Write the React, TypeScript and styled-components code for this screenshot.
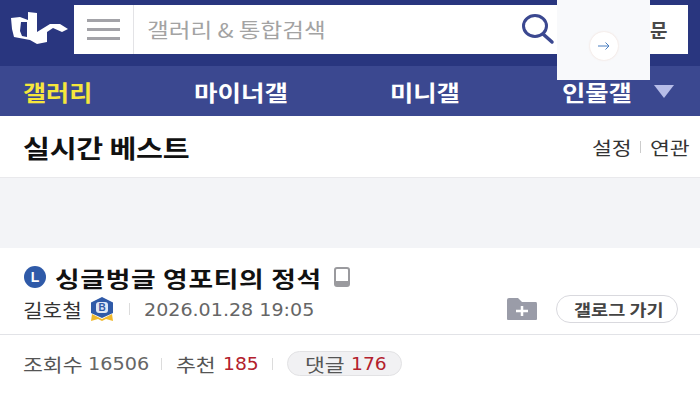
import React from 'react'
import styled, { createGlobalStyle } from 'styled-components'

const KR = `"Noto Sans CJK KR", "Liberation Sans", sans-serif`

const Global = createGlobalStyle`
  html, body { margin: 0; padding: 0; background: #fff; }
  body { width: 700px; height: 400px; overflow: hidden; font-family: ${KR}; }
`

// the page in the picture is stretched sideways, so text gets a fixed box and a horizontal scale
const Wide = styled.span<{ $w: number; $x: number }>`
  display: inline-block;
  flex: none;
  width: ${(p) => p.$w}px;
  white-space: nowrap;
  transform-origin: left center;
  transform: scaleX(${(p) => p.$x});
`

const Page = styled.div`
  position: relative;
  width: 700px;
  height: 400px;
  overflow: hidden;
`

const Header = styled.header`
  display: flex;
  align-items: flex-start;
  height: 66px;
  box-sizing: border-box;
  padding: 5px 12px 0 10px;
  background: #29367f;
`

const Logo = styled.svg`
  width: 60px;
  height: 36px;
  margin-top: 6px;
  margin-right: 4px;
  flex: none;
`

const SearchBox = styled.div`
  flex: 1;
  display: flex;
  align-items: center;
  height: 49px;
  background: #fff;
`

const MenuButton = styled.div`
  display: flex;
  flex-direction: column;
  justify-content: center;
  gap: 6px;
  width: 60px;
  height: 100%;
  box-sizing: border-box;
  padding: 0 13px;
  border-right: 1px solid #e3e3e6;
`

const MenuBar = styled.span`
  display: block;
  height: 3px;
  background: #a3a3a8;
`

const Placeholder = styled(Wide)`
  margin-left: 13px;
  margin-right: auto;
  font-size: 20px;
  color: #a3a3a3;
`

const SearchIcon = styled.svg`
  width: 34px;
  height: 34px;
  margin-right: 133px;
  flex: none;
`

const LoginLabel = styled.span`
  position: absolute;
  left: 650px;
  top: 16px;
  font-size: 19px;
  font-weight: 700;
  color: #4a4a4a;
`

const AdOverlay = styled.div`
  position: absolute;
  left: 557px;
  top: 0;
  width: 93px;
  height: 80px;
  display: flex;
  align-items: center;
  justify-content: center;
  padding-top: 12px;
  box-sizing: border-box;
  background: #f8f9fb;
`

const AdArrow = styled.div`
  display: flex;
  align-items: center;
  justify-content: center;
  width: 28px;
  height: 28px;
  border-radius: 50%;
  background: #fff;
  box-shadow: 0 0 2px rgba(230, 190, 170, 0.6);
`

const Nav = styled.nav`
  display: grid;
  grid-template-columns: 171px 196px 172px 1fr;
  align-items: center;
  height: 50px;
  box-sizing: border-box;
  padding-left: 23px;
  background: #3b4890;
`

const NavItem = styled.div<{ $active?: boolean }>`
  display: flex;
  align-items: center;
  font-size: 22px;
  font-weight: 700;
  line-height: 50px;
  color: ${(p) => (p.$active ? '#f5e63c' : '#fff')};
`

const NavArrow = styled.span`
  width: 0;
  height: 0;
  margin-left: 22px;
  border-left: 10px solid transparent;
  border-right: 10px solid transparent;
  border-top: 13px solid #b7bde8;
`

const SectionBar = styled.div`
  display: flex;
  align-items: center;
  justify-content: space-between;
  height: 62px;
  box-sizing: border-box;
  padding: 0 10px 0 23px;
  border-bottom: 1px solid #e9e9ec;
`

const SectionTitle = styled(Wide)`
  font-size: 25px;
  font-weight: 700;
  letter-spacing: -0.2px;
  color: #111;
`

const SectionLinks = styled.div`
  display: flex;
  align-items: center;
  font-size: 18px;
  color: #333;
`

const LinkDivider = styled.span`
  width: 1px;
  height: 12px;
  margin: 0 9px 0 9px;
  background: #ccc;
`

const AdBand = styled.div`
  height: 70px;
  background: #f3f4f7;
`

const PostHead = styled.div`
  height: 87px;
  box-sizing: border-box;
  padding: 15px 22px 0 24px;
  border-bottom: 1px solid #e2e3e7;
`

const TitleRow = styled.div`
  display: flex;
  align-items: center;
  height: 28px;
`

const LevelBadge = styled.span`
  display: flex;
  align-items: center;
  justify-content: center;
  width: 22px;
  height: 22px;
  margin-right: 9px;
  border-radius: 50%;
  background: #2f5aa8;
  font-family: "Liberation Sans", sans-serif;
  font-size: 14px;
  font-weight: 700;
  color: #fff;
`

const PostTitle = styled(Wide)`
  margin-right: 13px;
  font-size: 22px;
  font-weight: 700;
  letter-spacing: 0.6px;
  color: #111;
`

const MetaRow = styled.div`
  display: flex;
  align-items: center;
  height: 32px;
  margin-top: 2px;
  margin-left: -1px;
`

const Author = styled(Wide)`
  font-size: 19px;
  color: #333;
`

const Divider = styled.span`
  width: 1px;
  height: 12px;
  margin: 0 14px;
  background: #dcdcdc;
`

const BadgeIcon = styled.svg`
  width: 26px;
  height: 26px;
  margin-left: 8px;
`

const DateText = styled(Wide)`
  font-family: "DejaVu Sans", sans-serif;
  font-size: 18px;
  color: #666;
`

const FolderIcon = styled.svg`
  width: 32px;
  height: 24px;
  margin-left: auto;
  margin-right: 18px;
`

const GallogButton = styled.div`
  display: flex;
  align-items: center;
  width: 122px;
  height: 28px;
  box-sizing: border-box;
  padding-left: 17px;
  border: 1px solid #d9d9de;
  border-radius: 14px;
  font-size: 16px;
  font-weight: 700;
  color: #444;
`

const StatsRow = styled.div`
  display: flex;
  align-items: center;
  height: 57px;
  padding-left: 23px;
  font-size: 18px;
  color: #555;
`

const Num = styled(Wide)<{ $red?: boolean }>`
  margin-left: 8px;
  font-family: "DejaVu Sans", sans-serif;
  font-size: 17px;
  color: ${(p) => (p.$red ? '#b3202c' : '#666')};
`

const ReplyPill = styled.span`
  display: flex;
  align-items: center;
  height: 25px;
  box-sizing: border-box;
  padding: 0 15px 0 17px;
  border: 1px solid #e2e2e4;
  border-radius: 13px;
  background: #f1f1f3;
`

export default function App() {
  return (
    <Page>
      <Global />
      <Header>
        <Logo viewBox="0 0 60 36">
          <path
            d="M1 7 L10 6 L18 9 L18 1 L27 2 L27 21 L40 13 L50 13 L58 18 L52 21 L43 17 L37 21 L37 31 L27 33 L20 29 L4 26 L2 18 Z M11 11 L10 20 L12 25 L17 26 L17 11 Z"
            fill="#fff"
            fillRule="evenodd"
          />
        </Logo>
        <SearchBox>
          <MenuButton>
            <MenuBar />
            <MenuBar />
            <MenuBar />
          </MenuButton>
          <Placeholder $w={180} $x={1.18}>
            갤러리 &amp; 통합검색
          </Placeholder>
          <SearchIcon viewBox="0 0 34 34">
            <ellipse cx="14" cy="13" rx="11.5" ry="10.5" fill="none" stroke="#3b4890" strokeWidth="3" />
            <path d="M22 21 L31 29" stroke="#3b4890" strokeWidth="3.5" strokeLinecap="round" />
          </SearchIcon>
        </SearchBox>
      </Header>
      <LoginLabel>문</LoginLabel>
      <Nav>
        <NavItem $active>
          <Wide $w={69} $x={1.14}>갤러리</Wide>
        </NavItem>
        <NavItem>
          <Wide $w={93} $x={1.16}>마이너갤</Wide>
        </NavItem>
        <NavItem>
          <Wide $w={70} $x={1.15}>미니갤</Wide>
        </NavItem>
        <NavItem>
          <Wide $w={70} $x={1.15}>인물갤</Wide>
          <NavArrow />
        </NavItem>
      </Nav>
      <AdOverlay>
        <AdArrow>
          <svg width="14" height="10" viewBox="0 0 14 10">
            <path d="M1 5 H12 M8.5 1.5 L12 5 L8.5 8.5" fill="none" stroke="#4a7fc0" strokeWidth="1" />
          </svg>
        </AdArrow>
      </AdOverlay>
      <SectionBar>
        <SectionTitle $w={166} $x={1.17}>실시간 베스트</SectionTitle>
        <SectionLinks>
          <Wide $w={39} $x={1.2}>설정</Wide>
          <LinkDivider />
          <Wide $w={40} $x={1.2}>연관</Wide>
        </SectionLinks>
      </SectionBar>
      <AdBand />
      <PostHead>
        <TitleRow>
          <LevelBadge>L</LevelBadge>
          <PostTitle $w={266} $x={1.215}>싱글벙글 영포티의 정석</PostTitle>
          <svg width="16" height="20" viewBox="0 0 16 20">
            <rect x="1" y="1" width="14" height="18" rx="2" fill="#fff" stroke="#9a9a9e" strokeWidth="2" />
            <rect x="2" y="14" width="12" height="4" fill="#9a9a9e" />
          </svg>
        </TitleRow>
        <MetaRow>
          <Author $w={58} $x={1.12}>길호철</Author>
          <BadgeIcon viewBox="0 0 26 26">
            <path d="M3 18 L13 23 L23 18 L24 25 L17 23 L13 25 L9 23 L2 25 Z" fill="#f0b92d" />
            <path d="M13 1 L24 6.5 L24 17 L13 22 L2 17 L2 6.5 Z" fill="#2f5aa8" />
            <rect x="7" y="6" width="12" height="11" rx="3" fill="#dfe6f5" />
            <text x="13" y="15" textAnchor="middle" fontSize="10" fontWeight="700" fontFamily="Liberation Sans" fill="#2f5aa8">B</text>
          </BadgeIcon>
          <Divider />
          <DateText $w={170} $x={1.06}>2026.01.28 19:05</DateText>
          <FolderIcon viewBox="0 0 32 24">
            <path d="M1 3 Q1 1 3 1 H12 L16 5 H30 Q31 5 31 7 V22 Q31 23 30 23 H2 Q1 23 1 22 Z" fill="#9a9ca8" />
            <path d="M16 9 V19 M10 14 H22" stroke="#fff" strokeWidth="2.5" />
          </FolderIcon>
          <GallogButton>
            <Wide $w={88} $x={1.16}>갤로그 가기</Wide>
          </GallogButton>
        </MetaRow>
      </PostHead>
      <StatsRow>
        <Wide $w={57} $x={1.2}>조회수</Wide>
        <Num $w={59} $x={1.13}>16506</Num>
        <Divider />
        <Wide $w={39} $x={1.2}>추천</Wide>
        <Num $w={35} $x={1.1} $red>185</Num>
        <Divider />
        <ReplyPill>
          <Wide $w={38} $x={1.2}>댓글</Wide>
          <Num $w={35} $x={1.1} $red>176</Num>
        </ReplyPill>
      </StatsRow>
    </Page>
  )
}
